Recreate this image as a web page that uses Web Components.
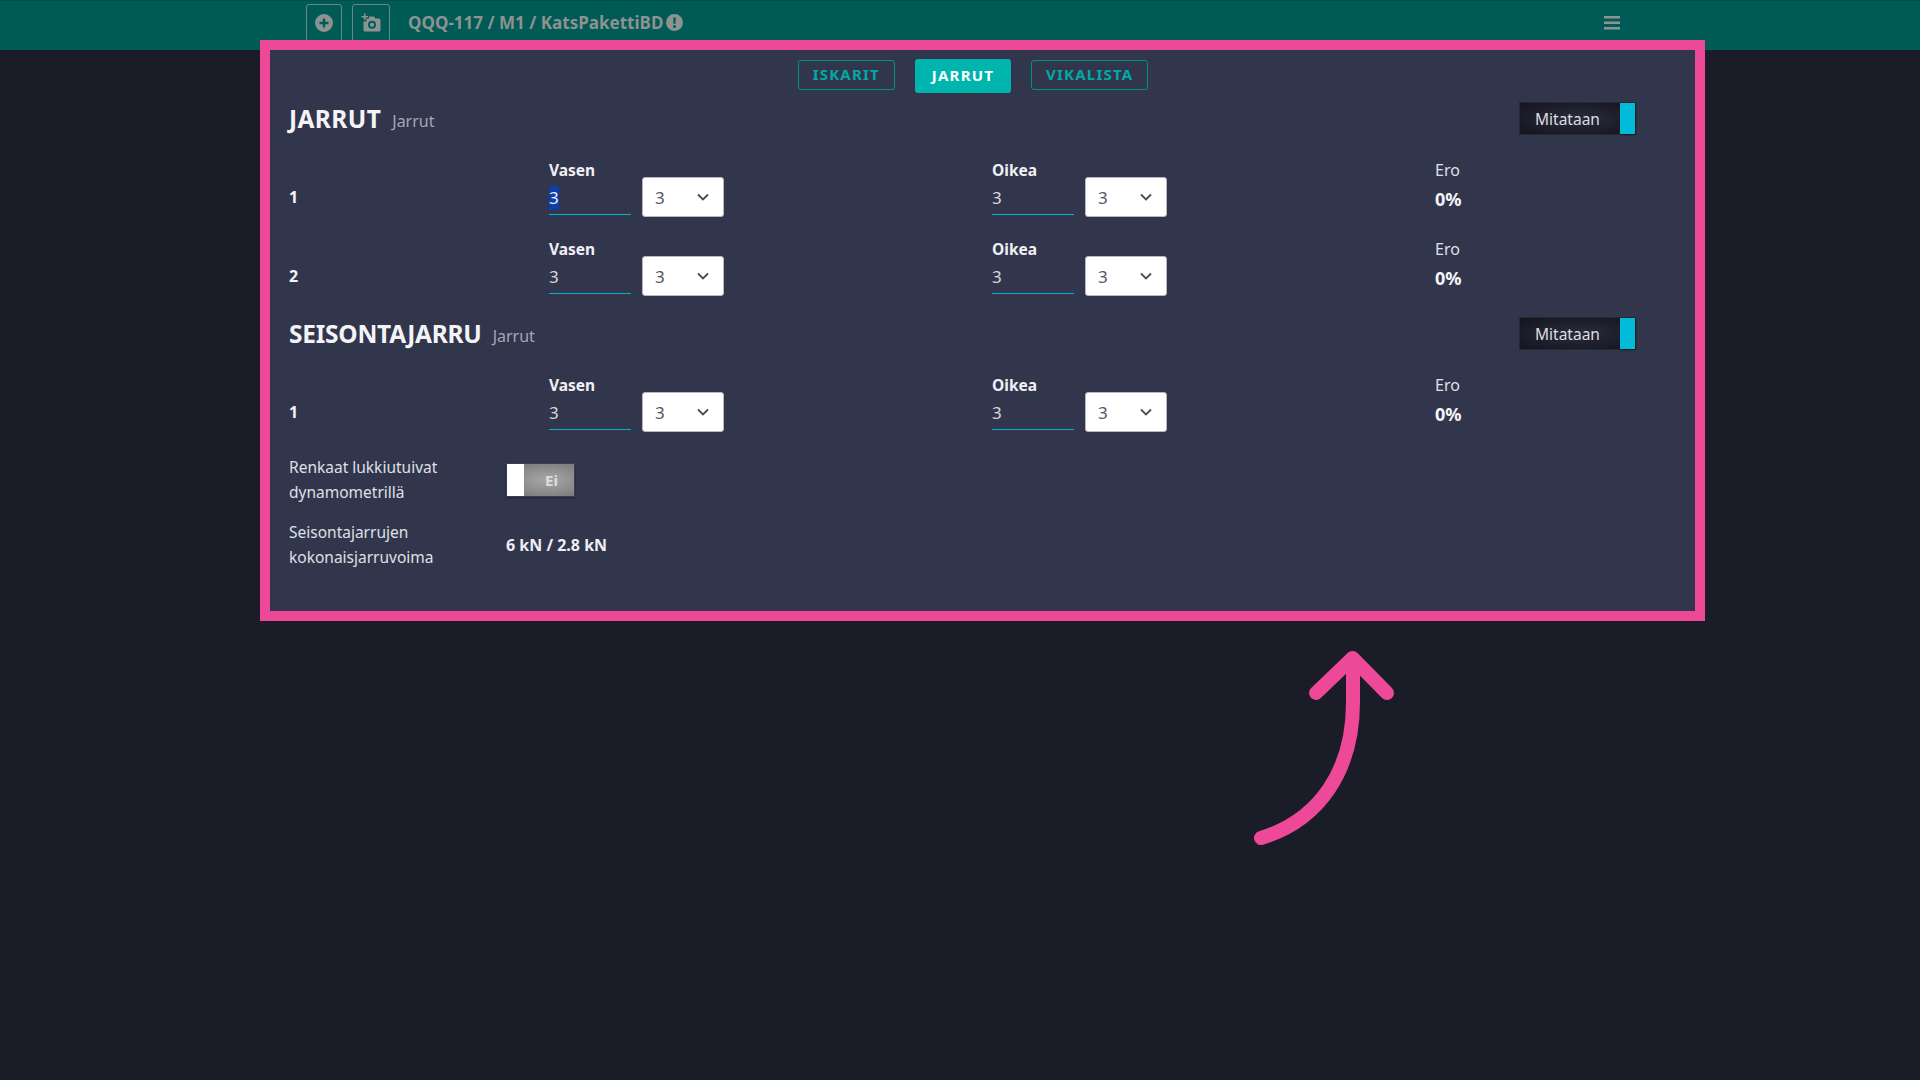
<!DOCTYPE html>
<html lang="fi">
<head>
<meta charset="UTF-8">
<title>Jarrut</title>
<style>
  html, body { margin: 0; padding: 0; }
  body {
    position: relative;
    width: 1920px;
    height: 1080px;
    overflow: hidden;
    background: #1a1c28;
    font-family: "Noto Sans", "Open Sans", sans-serif;
    color: #e8e9ee;
  }
</style>
</head>
<body>

<top-bar title-text="QQQ-117 / M1 / KatsPakettiBD"></top-bar>

<brake-panel>
  <tab-row>
    <tab-button>ISKARIT</tab-button>
    <tab-button active>JARRUT</tab-button>
    <tab-button>VIKALISTA</tab-button>
  </tab-row>

  <section-head title-text="JARRUT" sub="Jarrut" style="--track: .4px"></section-head>
  <measure-row num="1" class="after-head" selected></measure-row>
  <measure-row num="2" class="before-head"></measure-row>

  <section-head title-text="SEISONTAJARRU" sub="Jarrut" style="--track: -.25px"></section-head>
  <measure-row num="1" class="after-head last"></measure-row>

  <info-row>
    <span slot="label">Renkaat lukkiutuivat<br>dynamometrillä</span>
    <off-toggle></off-toggle>
  </info-row>
  <info-row>
    <span slot="label">Seisontajarrujen<br>kokonaisjarruvoima</span>
    <b>6 kN / 2.8 kN</b>
  </info-row>
</brake-panel>

<call-out></call-out>

<script>
(function (customElements) {
  'use strict';

  // small helper, every element here is the same shape
  const define = (name, css, html) => {
    customElements.define(name, class extends HTMLElement {
      constructor() {
        super();
        const root = this.attachShadow({mode: 'open'});
        root.innerHTML = `<style>${css}</style>` + (typeof html === 'function' ? html(this) : html);
      }
    });
  };

  define('top-bar', `
    :host { display: flex; align-items: center; height: 50px; box-sizing: border-box; padding: 0 0 6px 306px;
      background: #005a55; border-top: 1px solid #004f4b; color: #8c9391; }
    .btn { display: flex; align-items: center; justify-content: center; flex: none; width: 36px; height: 38px; box-sizing: border-box;
      border: 1px solid #6d8683; border-radius: 3px; margin-right: 10px; }
    .btn + .btn { width: 38px; margin-right: 18px; }
    .title { font-size: 17.050px; font-weight: 700; }
    .warn { margin-left: 3px; }
    .menu { margin-left: auto; margin-right: 300px; }
    svg { display: block; fill: currentColor; }
  `, host => `
    <div class="btn"><svg width="18" height="18" viewBox="0 0 18 18"><path fill-rule="evenodd" d="M9 0a9 9 0 1 0 0 18A9 9 0 0 0 9 0zM7.800 4.500h2.400v3.300h3.300v2.400h-3.300v3.300H7.800v-3.300H4.500V7.800h3.300z"/></svg></div>
    <div class="btn"><svg width="20" height="20" viewBox="0 0 20 20"><path fill-rule="evenodd" d="M3 .5h1.600V3H7v1.600H4.600V7H3V4.600H.5V3H3zM8 3.500h5l1.200 2H18a1.500 1.500 0 0 1 1.500 1.500v10a1.500 1.500 0 0 1-1.500 1.500H4A1.500 1.500 0 0 1 2.500 17V8.500H5.500V5.800H8zM11 7.800a4 4 0 1 0 0 8 4 4 0 0 0 0-8zm0 1.900a2.100 2.100 0 1 1 0 4.200 2.100 2.100 0 0 1 0-4.200z"/></svg></div>
    <span class="title">${host.getAttribute('title-text')}</span>
    <svg class="warn" width="17" height="17" viewBox="0 0 17 17"><path fill-rule="evenodd" d="M8.500 0a8.500 8.500 0 1 0 0 17 8.500 8.500 0 0 0 0-17zM7.200 3.500h2.600l-.4 6.500H7.600zM8.500 11a1.500 1.500 0 1 1 0 3 1.500 1.500 0 0 1 0-3z"/></svg>
    <svg class="menu" width="16" height="14" viewBox="0 0 16 14"><path d="M0 0h16v2.600H0zM0 5.500h16v2.600H0zM0 11h16v2.600H0z"/></svg>
  `);

  define('brake-panel', `
    :host { display: block; box-sizing: border-box; width: 1445px; height: 570px; margin-left: 260px;
      padding: 9px 29px 0; background: #32364d; }
  `, `<slot></slot>`);

  define('tab-row', `
    :host { display: flex; justify-content: center; align-items: flex-start; gap: 20px; height: 43px; padding-right: 19px; }
  `, `<slot></slot>`);

  define('tab-button', `
    :host { display: block; box-sizing: border-box; height: 30px; margin-top: 1px; padding: 0 14px; line-height: 27px;
      border: 1.500px solid #00908c; border-radius: 3px; color: #00aaa4;
      font-size: 15px; font-weight: 700; letter-spacing: 1.200px; }
    :host([active]) { height: 34px; margin-top: 0; line-height: 33px; border: 0; padding: 0 17px;
      background: #00b5ad; color: #fff; border-radius: 3px; }
  `, `<slot></slot>`);

  define('section-head', `
    :host { display: flex; align-items: center; height: 33px; padding-right: 40px; }
    .t { font-size: 24.500px; font-weight: 700; color: #f4f4f6; letter-spacing: var(--track, 0); }
    .s { margin-left: 11px; font-size: 16px; color: #a4a7b2; position: relative; top: 2px; }
    measure-toggle { margin-left: auto; }
  `, host => `
    <span class="t">${host.getAttribute('title-text')}</span>
    <span class="s">${host.getAttribute('sub')}</span>
    <measure-toggle></measure-toggle>
  `);

  define('measure-toggle', `
    :host { display: flex; box-sizing: border-box; width: 117px; height: 33px; border: 1px solid #262833;
      background: radial-gradient(ellipse at center, #2a2c3d, #13141d); color: #dcdde2; font-size: 15.500px; }
    .l { flex: 1; line-height: 32px; padding-left: 15px; }
    .h { width: 15px; background: #00bcd8; box-shadow: 1px 1px 2px rgba(0,0,0,.4); }
  `, `<div class="l">Mitataan</div><div class="h"></div>`);

  define('measure-row', `
    :host { display: grid; grid-template-columns: 260px 443px 443px 1fr; height: 79px; }
    :host(.after-head) { margin-top: 25px; }
    :host(.before-head) { height: 78px; }
    :host(.last) { height: 72px; }
    .num { font-size: 16px; font-weight: 700; color: #f4f4f6; padding-top: 26px; }
    .ero { font-size: 16px; color: #dfe0e5; line-height: 21px; }
    .ero b { display: block; font-size: 18px; color: #f4f4f6; margin-top: 6px; line-height: 24px; }
  `, host => `
    <div class="num">${host.getAttribute('num')}</div>
    <side-field label="Vasen" ${host.hasAttribute('selected') ? 'selected' : ''}></side-field>
    <side-field label="Oikea"></side-field>
    <div class="ero">Ero<b>0%</b></div>
  `);

  define('side-field', `
    :host { display: block; color: #f0f0f3; }
    .lab { font-size: 15.500px; font-weight: 700; line-height: 21px; height: 17px; }
    .cols { display: flex; gap: 11px; }
    .inp { box-sizing: border-box; width: 82px; height: 38px; border-bottom: 1.500px solid #00b4d0;
      font-size: 17px; line-height: 24px; padding-top: 9px; color: #d6d8de; }
    .inp span.sel { background: #0f3fa6; color: #e4ecff; display: inline-block; width: 10px; }
    .dd { display: flex; align-items: center; justify-content: space-between; box-sizing: border-box; width: 82px; height: 40px;
      background: #fff; border: 1px solid #b8b9c0; border-radius: 3px; padding: 0 14px 0 12px;
      color: #55585f; font-size: 17px; }
    svg { display: block; fill: none; stroke: #4a4c52; stroke-width: 1.800; }
  `, host => `
    <div class="lab">${host.getAttribute('label')}</div>
    <div class="cols">
      <div class="inp"><span class="${host.hasAttribute('selected') ? 'sel' : ''}">3</span></div>
      <div class="dd">3<svg width="12" height="8" viewBox="0 0 12 8"><path d="M1 1.500l5 5 5-5"/></svg></div>
    </div>
  `);

  define('info-row', `
    :host { display: grid; grid-template-columns: 217px 1fr; align-items: center; height: 65px; color: #dfe0e5; font-size: 15.500px; line-height: 25px; }
    ::slotted(b) { font-size: 16px; color: #eeeff2; position: relative; top: 1px; }
  `, `<div><slot name="label"></slot></div><div><slot></slot></div>`);

  define('off-toggle', `
    :host { display: flex; box-sizing: border-box; width: 69px; height: 34px; border: 1px solid #3d3f4c;
      background: radial-gradient(ellipse at 60% 50%, #a8a8a8, #737373); box-shadow: 0 1px 2px rgba(0,0,0,.4);
      color: #dedede; font-size: 15px; font-weight: 700; }
    .h { width: 17px; background: #fff; }
    .l { flex: 1; text-align: center; line-height: 32px; padding-left: 5px; }
  `, `<div class="h"></div><div class="l">Ei</div>`);

  // the pink annotation that lies over the app
  define('call-out', `
    :host { position: absolute; left: 0; top: 0; width: 1920px; height: 1080px; pointer-events: none; }
    .frame { position: absolute; left: 260px; top: 40px; width: 1445px; height: 581px; box-sizing: border-box; border: 10px solid #ee4899; }
    svg { position: absolute; left: 0; top: 0; }
  `, `
    <div class="frame"></div>
    <svg width="1920" height="1080" viewBox="0 0 1920 1080" fill="none" stroke="#ee4899" stroke-width="14" stroke-linecap="round" stroke-linejoin="round">
      <path d="M1261 838C1320 820 1353 770 1353 702V662"/>
      <path d="M1316 693L1352.500 658L1387 693" />
    </svg>
  `);
})(window.customElements);
</script>
</body>
</html>
